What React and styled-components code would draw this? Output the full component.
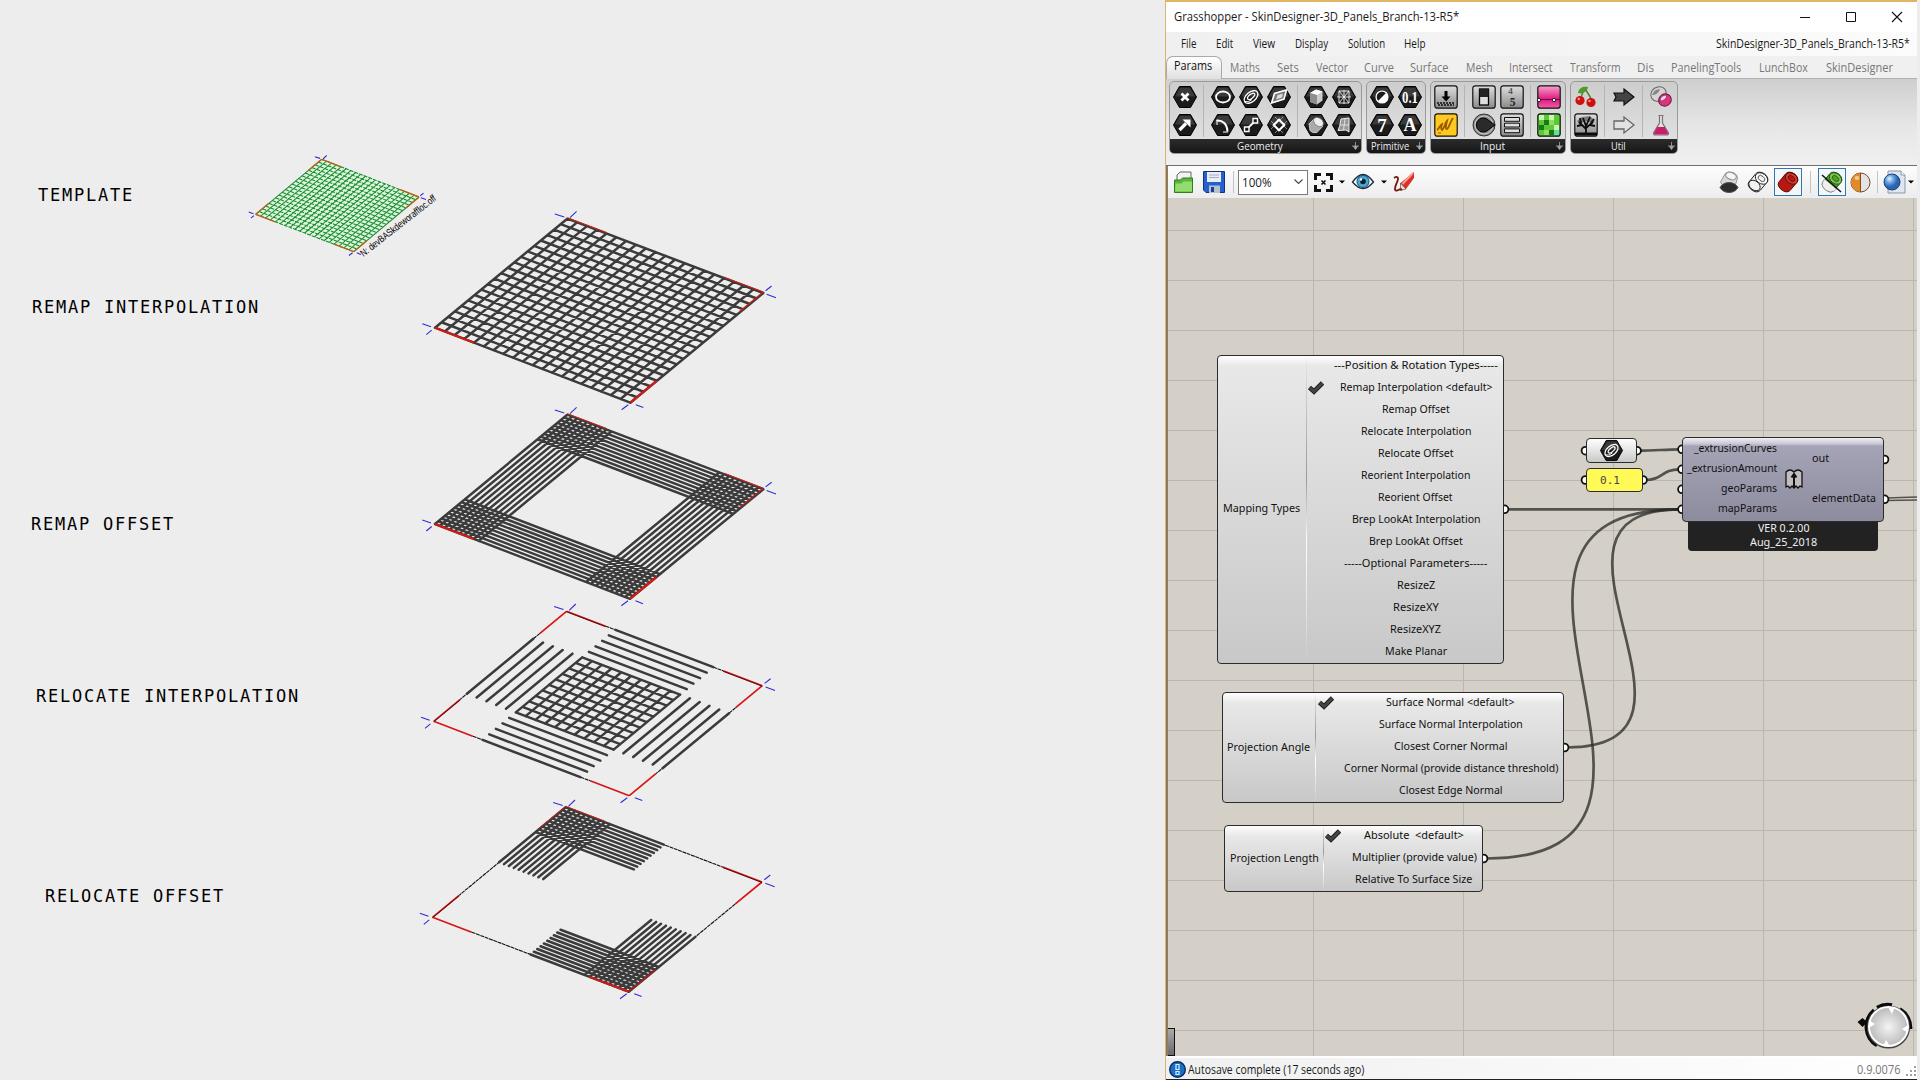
import React, { useLayoutEffect, useRef, useState } from "react";
import styled, { createGlobalStyle, css } from "styled-components";

const Global = createGlobalStyle`
  * { box-sizing: border-box; }
  body { margin: 0; background: #ededed; overflow: hidden; }
`;

/* ---------- shared ---------- */

const FitOuter = styled.span`
  display: inline-block;
  white-space: pre;
  width: ${(p) => p.$w}px;
  flex: none;
`;
const FitInner = styled.span`
  display: inline-block;
  transform-origin: 0 50%;
`;

function Fit({ w, children }) {
  const ref = useRef(null);
  const [k, setK] = useState(1);
  useLayoutEffect(() => {
    setK(w / ref.current.offsetWidth);
  }, [w, children]);
  return (
    <FitOuter $w={w}>
      <FitInner ref={ref} style={{ transform: `scaleX(${k})` }}>{children}</FitInner>
    </FitOuter>
  );
}

const Screen = styled.div`
  width: 1920px;
  height: 1080px;
  display: flex;
  background: #ededed;
  overflow: hidden;
  font-family: "Open Sans", "Noto Sans", sans-serif;
`;

/* ---------- viewport on the left ---------- */

const Viewport = styled.section`
  position: relative;
  width: 1165px;
  height: 1080px;
  padding-top: 183px;
`;
const Scene = styled.svg`
  position: absolute;
  inset: 0;
`;
const Caption = styled.div`
  font: 17px/24px "DejaVu Sans Mono", monospace;
  letter-spacing: 1.77px;
  color: #000;
  white-space: pre;
  padding-left: ${(p) => p.$x}px;
  margin-bottom: ${(p) => p.$gap}px;
`;

const captions = [
  ["TEMPLATE", 38, 88],
  ["REMAP INTERPOLATION", 32, 193],
  ["REMAP OFFSET", 31, 148],
  ["RELOCATE INTERPOLATION", 36, 176],
  ["RELOCATE OFFSET", 45, 0],
];

const fine = Array.from({ length: 21 }, (_, i) => i / 20);
const low = Array.from({ length: 10 }, (_, i) => i * 0.025);
const high = low.map((v) => 1 - v);

const at = ([a, b, c, d], u, v) => {
  const f = (i) =>
    a[i] * (1 - u) * (1 - v) + b[i] * u * (1 - v) + c[i] * u * v + d[i] * (1 - u) * v;
  return `${f(0).toFixed(2)} ${f(1).toFixed(2)}`;
};
const along = (q, vs, s, e) => vs.map((v) => `M${at(q, s, v)}L${at(q, e, v)}`).join("");
const across = (q, us, s, e) => us.map((u) => `M${at(q, u, s)}L${at(q, u, e)}`).join("");
const seg = (q, u0, v0, u1, v1) => `M${at(q, u0, v0)}L${at(q, u1, v1)}`;

const ticks = [
  [[-12.5, -4.7, -3, -1.7], [2.7, -1, 9.3, -7.3]],
  [[2.3, -2.3, 8.3, -7], [3.3, 1.3, 12.7, 4.7]],
  [[5.5, 2, 13, 4.9], [-2, 2, -8.7, 7]],
  [[-12.7, -4, -4, -1], [-3.3, 2.5, -8.7, 7]],
];

function Ticks({ q, k = 1 }) {
  const d = q
    .map(([x, y], i) =>
      ticks[i].map(([a, b, c, e]) => `M${x + a * k} ${y + b * k}L${x + c * k} ${y + e * k}`).join("")
    )
    .join("");
  return <path d={d} stroke="#2e2ed8" strokeWidth="1.1" fill="none" />;
}

const quads = {
  template: [[321.7, 159.3], [419, 197], [353.7, 251.7], [255.7, 214.3]],
  remapI: [[567.3, 218.7], [763.3, 293], [630.3, 402.7], [435, 327.7]],
  remapO: [[567.3, 414.7], [763.3, 489.2], [630, 598.8], [435, 524]],
  relocI: [[566.5, 611.3], [762.3, 685.7], [629.3, 795.7], [433.7, 721.3]],
  relocO: [[565.7, 807.3], [762, 882], [628.7, 991.7], [432.5, 917.3]],
};

const bar = { stroke: "#3b3b3b", strokeWidth: 2.5, fill: "none", strokeLinecap: "round" };

const corners = (q) =>
  [
    seg(q, 0, 0, 0.2, 0), seg(q, 0.8, 0, 1, 0), seg(q, 1, 0, 1, 0.2), seg(q, 1, 0.8, 1, 1),
    seg(q, 0.8, 1, 1, 1), seg(q, 0, 1, 0.2, 1), seg(q, 0, 0.8, 0, 1), seg(q, 0, 0, 0, 0.2),
  ].join("");

function Outline({ q }) {
  return (
    <>
      <path
        d={along(q, [0, 1], 0.2, 0.8) + across(q, [0, 1], 0.2, 0.8)}
        stroke="#111"
        strokeWidth="1.1"
        strokeDasharray="4 .6"
        fill="none"
      />
      <path d={corners(q)} stroke="#d81414" strokeWidth="1.7" fill="none" />
      <path
        d={seg(q, 0, 0, 0.2, 0) + seg(q, 0.8, 0, 1, 0) + seg(q, 0, 0.8, 0, 1)}
        stroke="#3a0505"
        strokeWidth=".8"
        transform="translate(0 .5)"
        fill="none"
      />
    </>
  );
}

function RedEdges({ q }) {
  return (
    <>
      <path
        d={seg(q, 0, 0, 0.2, 0) + seg(q, 0.8, 0, 1, 0) + seg(q, 1, 0, 1, 0.18)}
        stroke="#d0201a"
        strokeWidth="1.1"
        transform="translate(0 -1)"
        fill="none"
      />
      <path d={seg(q, 1, 0.8, 1, 1) + seg(q, 0, 1, 0.2, 1)} stroke="#d41a14" strokeWidth="2.2" fill="none" />
    </>
  );
}

function Drawings() {
  const { template: t, remapI, remapO, relocI, relocO } = quads;
  return (
    <Scene width="1165" height="1080" viewBox="0 0 1165 1080">
      <polygon points={t.map((p) => p.join(",")).join(" ")} fill="#dcf6dc" />
      <path d={along(t, fine, 0, 1)} stroke="#128a2c" strokeWidth="1.05" strokeDasharray="4 1" fill="none" />
      <path d={across(t, fine, 0, 1)} stroke="#1e8a34" strokeWidth="1.05" fill="none" />
      <path d={corners(t)} stroke="#b8641c" strokeWidth="1.4" fill="none" />
      <Ticks q={t} k={0.55} />
      <text
        transform="translate(363.500 257) rotate(-38)"
        fontFamily="Liberation Sans, sans-serif"
        fontSize="10"
        textLength="93"
        lengthAdjust="spacingAndGlyphs"
      >
        N: devBASkdeworaffloc.off
      </text>

      <path {...bar} d={along(remapI, fine, 0, 1) + across(remapI, fine, 0, 1)} />
      <RedEdges q={remapI} />
      <Ticks q={remapI} />

      <path
        {...bar}
        d={along(remapO, [...low, ...high], 0, 1) + across(remapO, [...low, ...high], 0, 1)}
      />
      <RedEdges q={remapO} />
      <Ticks q={remapO} />

      <Outline q={relocI} />
      <path {...bar} d={along(relocI, fine, 0.25, 0.75) + across(relocI, fine, 0.25, 0.75)} />
      <Ticks q={relocI} />

      <Outline q={relocO} />
      <path
        {...bar}
        d={
          along(relocO, low, 0, 0.5) + across(relocO, low, 0, 0.5) +
          along(relocO, high, 0.5, 1) + across(relocO, high, 0.5, 1)
        }
      />
      <path
        d={seg(relocO, 0, 0, 0.2, 0) + seg(relocO, 0, 0, 0, 0.2)}
        stroke="#c8201a"
        strokeWidth="1"
        transform="translate(0 -1)"
        fill="none"
      />
      <path d={seg(relocO, 0.8, 1, 1, 1)} stroke="#d41a14" strokeWidth="2" fill="none" />
      <path d={seg(relocO, 1, 0.8, 1, 1)} stroke="#c01a14" strokeWidth="1.2" fill="none" />
      <Ticks q={relocO} />
    </Scene>
  );
}

/* ---------- window chrome ---------- */

const Window = styled.main`
  width: 752px;
  height: 1080px;
  display: flex;
  flex-direction: column;
  border-left: 1px solid #d9b46c;
  border-top: 2px solid #e2b562;
  background: #f0f0f0;
  color: #1a1a1a;
`;
const TitleBar = styled.header`
  height: 30px;
  flex: none;
  display: flex;
  align-items: center;
  padding: 0 15px 1px 8px;
  background: #fff;
  font-size: 12.5px;
`;
const Controls = styled.div`
  margin-left: auto;
  display: flex;
  align-items: center;
  gap: 36px;
`;
const MenuBar = styled.nav`
  height: 24px;
  flex: none;
  display: flex;
  align-items: center;
  padding: 0 7px 0 15px;
  background: linear-gradient(90deg, #f0f0f0, #f5f5f5 60%, #fcfcfc);
  font-size: 12px;
`;
const MenuItem = styled.span`
  margin-right: 19.7px;
  line-height: 20px;
`;
const DocName = styled.span`
  margin-left: auto;
  line-height: 20px;
`;
const TabRow = styled.div`
  height: 23px;
  flex: none;
  display: flex;
  align-items: center;
  background: #f0f0f0;
  box-shadow: inset 0 -1px #b0b0b0;
  font-size: 12px;
  color: #777;
`;
const ActiveTab = styled.div`
  width: 56px;
  height: 23px;
  padding: 0 0 2px 7px;
  border: 1px solid #aaa;
  border-bottom: 0;
  border-radius: 7px 7px 0 0;
  background: linear-gradient(#fff, #e0e0e0);
  color: #111;
  line-height: 18px;
  margin-right: 8px;
`;
const Tab = styled.span`
  margin-right: ${(p) => p.$gap}px;
  line-height: 20px;
`;
const Ribbon = styled.div`
  height: 87px;
  flex: none;
  display: flex;
  align-items: flex-start;
  gap: 4px;
  padding: 2px 0 0 3px;
  background: linear-gradient(#cfcfcf, #e6e6e6 55%, #f0f0f0);
  border-bottom: 1px solid #6e6e6e;
`;
const Group = styled.section`
  height: 73px;
  width: ${(p) => p.$w}px;
  border: 1px solid #999;
  border-radius: 5px;
  overflow: hidden;
  display: flex;
  flex-direction: column;
  justify-content: space-between;
  background: linear-gradient(#cdcdcd, #e4e4e4);
`;
const Sets = styled.div`
  display: flex;
  padding: 2.5px 0 0 3px;
`;
const IconSet = styled.div`
  display: grid;
  grid-auto-flow: column;
  grid-template-rows: 24px 24px;
  gap: 4px;
  & + & {
    margin-left: 6.3px;
    padding-left: 6.3px;
    border-left: 1px solid #b4b4b4;
  }
`;
const GroupLabel = styled.footer`
  height: 14px;
  display: grid;
  grid-template-columns: 1fr 12px;
  justify-items: center;
  align-items: center;
  background: linear-gradient(#2c2c2c, #161616);
  color: #eee;
  font-size: 11px;
  line-height: 14px;
`;
const Icon = styled.svg`
  display: block;
  flex: none;
  overflow: visible;
`;

const Toolbar = styled.div`
  height: 32px;
  flex: none;
  display: flex;
  align-items: center;
  border-left: 2px solid #8c7a62;
  background: linear-gradient(#fdfdfd, #ededed);
  padding-left: 5px;
`;
const Item = styled.span`
  display: inline-flex;
  justify-content: center;
  align-items: center;
  width: ${(p) => p.$w}px;
  height: 28px;
  margin-right: ${(p) => p.$gap || 0}px;
  ${(p) => p.$on && css`border: 1px solid #2f78b0; background: #f4f7f9;`}
`;
const Rule = styled.span`
  width: 1px;
  height: 22px;
  background: #c4c4c4;
  margin: 0 ${(p) => p.$r}px 0 ${(p) => p.$l}px;
`;
const Zoom = styled.span`
  width: 70px;
  height: 25px;
  border: 1px solid #7a7a7a;
  background: #fff;
  display: inline-flex;
  align-items: center;
  justify-content: space-between;
  padding: 0 4px 0 3px;
  font-size: 12px;
  margin-right: 5px;
`;
const Push = styled.span`
  flex: 1;
`;
const Status = styled.footer`
  height: 24px;
  flex: none;
  display: flex;
  align-items: center;
  border-top: 2px solid #fff;
  border-bottom: 1px solid #222;
  padding: 2px 0 0 3px;
  background: linear-gradient(90deg, #f0f0f0, #fff);
  font-size: 12px;
  gap: 2px;
`;
const Version = styled.span`
  margin-left: auto;
  margin-right: 3px;
  color: #777;
`;

const hexPoints = "0.5,12 6.5,1.5 17.5,1.5 23.5,12 17.5,22.5 6.5,22.5";

function Hex({ children, size = 24 }) {
  return (
    <Icon width={size} height={size} viewBox="0 0 24 24">
      <polygon points={hexPoints} fill="#1b1b1b" stroke="#000" strokeLinejoin="round" />
      <polygon points="2,11.5 7,2.7 17,2.7 22,11.5" fill="#5a5a5a" opacity=".5" />
      {children}
    </Icon>
  );
}
function Tile({ children, fill = "url(#steel)" }) {
  return (
    <Icon width="24" height="24" viewBox="0 0 24 24">
      <rect x=".8" y=".8" width="22.4" height="22.4" rx="2.5" fill={fill} stroke="#111" strokeWidth="1.2" />
      {children}
    </Icon>
  );
}
const Glyph = styled.text`
  font-family: "Liberation Serif", serif;
  font-weight: 700;
  fill: ${(p) => p.$c || "#fff"};
  text-anchor: middle;
`;
const w = { stroke: "#fff", strokeWidth: 1.6, fill: "none" };

const CurveMark = () => (
  <>
    <ellipse cx="12" cy="12" rx="8" ry="4.8" transform="rotate(-40 12 12)" {...w} strokeWidth="1.3" />
    <ellipse cx="12.5" cy="11.600" rx="4.300" ry="2" transform="rotate(-40 12 12)" {...w} strokeWidth="1.3" />
    <path d="M6 16.500Q9 18 13 14.500" {...w} strokeWidth="1" />
  </>
);

const geometry = [
  [
    <Hex key="x"><path d="M8.500 8.500l7 7M15.500 8.500l-7 7" {...w} strokeWidth="2.800" /></Hex>,
    <Hex key="v"><path d="M6.500 17L13 10.500" {...w} strokeWidth="3.200" /><path d="M9.500 6.500h8v8z" fill="#fff" /></Hex>,
  ],
  [
    <Hex key="c"><ellipse cx="12" cy="12" rx="7" ry="5.500" {...w} strokeWidth="1.800" /></Hex>,
    <Hex key="a"><path d="M5.500 7.500C12 7 16 11 16.500 18.500" {...w} strokeWidth="2" /><path d="M6 7v5M12 19h5" {...w} strokeWidth="1" /></Hex>,
    <Hex key="cu"><CurveMark /></Hex>,
    <Hex key="l"><path d="M8 16L16 8" {...w} strokeWidth="1.800" /><path d="M5.500 14h4.500v4.500h-4.500zM14 5.500h4.500v4.500h-4.500z" fill="#1b1b1b" stroke="#fff" strokeWidth="1.400" /></Hex>,
    <Hex key="p"><path d="M4.500 18l3-9.500 12-3.500-2.500 9z" fill="#777" stroke="#fff" strokeWidth="1.600" /><path d="M9 14.500l1.500-4.500 5.500-1.500-1 4z" fill="#ddd" /></Hex>,
    <Hex key="r"><path d="M4 8l12 12M8 4l12 12M20 8L8 20M16 4L4 16" {...w} strokeWidth=".800" opacity=".6" /><path d="M12 6.500l5.500 5.500-5.500 5.500-5.500-5.500z" {...w} strokeWidth="1.800" /></Hex>,
  ],
  [
    <Hex key="b"><path d="M6 8l6-3.500 6.500 2v9L13 19.500 6 17z" fill="#ccc" /><path d="M6 8l7 2 5.500-3.500-6.500-2z" fill="#fff" /><path d="M13 10v9.500L6 17V8z" fill="#8e8e8e" /></Hex>,
    <Hex key="br"><path d="M5 11l5-5 9 7-6 6.500q-5 1-7-2z" fill="#aaa" stroke="#ddd" strokeWidth=".800" /><ellipse cx="14.500" cy="9" rx="5.500" ry="3.800" transform="rotate(40 14.500 9)" fill="#eee" stroke="#666" strokeWidth=".600" /></Hex>,
    <Hex key="m"><path d="M7 6h10v12H7zM12 5v14M5 12h14M7 6l10 12M17 6L7 18" {...w} strokeWidth="1" opacity=".850" /></Hex>,
    <Hex key="s"><path d="M9 6l8-1v14l-3-2-8 .500q2-4 3-11.500z" fill="#999" stroke="#eee" strokeWidth="1" /><path d="M8 12h9M13 6l-1.500 11" stroke="#eee" strokeWidth=".800" /></Hex>,
  ],
];

const primitive = [
  [
    <Hex key="b"><circle cx="12" cy="12" r="6" fill="#fff" /><path d="M16 8A5.600 5.600 0 0 0 8 16z" fill="#1b1b1b" /><circle cx="12" cy="12" r="6" {...w} strokeWidth="1.200" /></Hex>,
    <Hex key="7"><Glyph x="12" y="18.500" fontSize="19">7</Glyph></Hex>,
    <Hex key="01"><Glyph x="12" y="17.500" fontSize="16" textLength="16" lengthAdjust="spacingAndGlyphs">0.1</Glyph></Hex>,
    <Hex key="A"><Glyph x="12" y="18" fontSize="18">A</Glyph></Hex>,
  ],
];

const input = [
  [
    <Tile key="bt"><path d="M12 6v7" stroke="#000" strokeWidth="3" /><path d="M7.500 11.500h9L12 16.500z" /><path d="M3 18h18M4 20h16" stroke="#111" strokeWidth="1.500" strokeDasharray="2 1" /></Tile>,
    <Tile key="gm" fill="#ffc91f"><path d="M3 17c2-1 3-5 5-6-1 3-1 6 0 6 2-1 3-7 5-9-1 4-2 8 0 8 2-1 3-7 6-11" stroke="#9a5b00" strokeWidth="1.800" fill="none" /><path d="M4 20h3" stroke="#9a5b00" /></Tile>,
  ],
  [
    <Tile key="sw"><rect x="7.500" y="4" width="9" height="16" fill="#ddd" stroke="#000" strokeWidth="1.300" /><rect x="7.500" y="4" width="9" height="8" fill="#222" /></Tile>,
    <Icon key="kn" width="24" height="24" viewBox="0 0 24 24"><circle cx="12" cy="12" r="11" fill="#8a8a8a" stroke="#333" /><circle cx="12" cy="12" r="9" fill="none" stroke="#ccc" strokeWidth="1" /><path d="M14 5.500A7 7 0 1 0 14 18.500L23 12z" fill="#2a2a2a" stroke="#000" /></Icon>,
    <Tile key="ds"><Glyph x="10.500" y="8.500" fontSize="9" $c="#555">4</Glyph><Glyph x="12.500" y="21" fontSize="11.500" $c="#222">5</Glyph></Tile>,
    <Tile key="vl"><path d="M4.500 4.500h15v3.800h-15zM4.500 10.200h15v3.800h-15zM4.500 15.900h15v3.800h-15z" fill="#ddd" stroke="#111" /></Tile>,
  ],
  [
    <Tile key="gr" fill="url(#pink)"><path d="M1 14.500h22" stroke="#7d0040" /><circle cx="2" cy="15" r="1.700" fill="#fff" stroke="#222" /><circle cx="17" cy="15" r="1.700" fill="#fff" stroke="#222" /></Tile>,
    <Tile key="im" fill="#5cc83a"><path d="M2 2h5v5H2zM12 2h5v5h-5zM17 12h5v5h-5z" fill="#c8f8b0" /><path d="M7 7h5v5H7zM2 12h5v5H2zM12 17h5v5h-5z" fill="#177a12" /><path d="M12 7h5v5h-5zM7 17h5v5H7z" fill="#8fe060" /><path d="M17 17h5v5h-5z" fill="#5fe0b0" /></Tile>,
  ],
];

const util = [
  [
    <Icon key="ch" width="24" height="24" viewBox="0 0 24 24"><path d="M11 4C8 8 7 12 7 15M11 4c3 4 6 8 7 13" stroke="#4a7a1a" strokeWidth="1.300" fill="none" /><path d="M4 8c1-6 6-7 10-6-1 5-5 7-10 6z" fill="#4f9a2a" /><circle cx="6" cy="15.500" r="4.600" fill="#cc1111" /><circle cx="17" cy="17.500" r="4.600" fill="#cc1111" /><circle cx="4.800" cy="14" r="1.200" fill="#ff9a9a" /><circle cx="15.500" cy="16" r="1.200" fill="#ff9a9a" /></Icon>,
    <Tile key="tr"><path d="M12 21V12M12 16L5 9M12 15l7-6M12 13L9 5M12 13l4-9M8 12l-5 1M16 12l5 1M7 10l-1-5M17 10l3-4" stroke="#0c0c0c" strokeWidth="1.800" fill="none" /><path d="M3 8l5-4 8-1 5 5-3 3-4-3-5 1-3 3z" fill="#111" opacity=".45" /><path d="M1 19.500h22v3H1z" fill="#0c0c0c" /></Tile>,
  ],
  [
    <Icon key="a1" width="24" height="24" viewBox="0 0 24 24"><path d="M2 8h10V4l10 8-10 8v-4H2l2-4z" fill="#444" stroke="#111" strokeWidth="1.200" /></Icon>,
    <Icon key="a2" width="24" height="24" viewBox="0 0 24 24"><path d="M2 8h10V4l10 8-10 8v-4H2z" fill="#e2e2e2" stroke="#666" strokeWidth="1.300" /></Icon>,
  ],
  [
    <Icon key="t1" width="24" height="24" viewBox="0 0 24 24"><ellipse cx="9.500" cy="9" rx="8" ry="7" transform="rotate(-35 9.500 9)" fill="#d4d4d4" stroke="#666" /><path d="M3 10q2-6 8-6-2 6-8 6z" fill="#888" /><ellipse cx="16" cy="15" rx="6.500" ry="6" transform="rotate(-35 16 15)" fill="#d8367e" stroke="#7a1048" /><path d="M11 16q0-6 7-6-1 6-7 6z" fill="#f8d0e4" stroke="#6a1040" strokeWidth=".600" /></Icon>,
    <Icon key="fl" width="24" height="24" viewBox="0 0 24 24"><path d="M9.500 2.500h5M10.500 3v7L4.500 20q0 2 2 2h11q2 0 2-2l-6-10V3" fill="#e8dde2" stroke="#777" strokeWidth="1.200" /><path d="M8.300 14h7.400l3.300 6q0 1.500-1.500 1.500h-11Q5 21.500 5 20z" fill="#c81e6a" /></Icon>,
  ],
];

const groups = [
  ["Geometry", 193, 45.5, geometry],
  ["Primitive", 60, 38, primitive],
  ["Input", 136, 25, input],
  ["Util", 108, 15, util],
];

const tabs = [
  ["Maths", 30, 16.5], ["Sets", 21.5, 17.5], ["Vector", 32, 16], ["Curve", 30.5, 15.5],
  ["Surface", 38.5, 17.5], ["Mesh", 27, 16.5], ["Intersect", 43.5, 17.5], ["Transform", 51, 16],
  ["Dis", 16.5, 17], ["PanelingTools", 70.5, 17.7], ["LunchBox", 48.5, 18.5], ["SkinDesigner", 67, 0],
];

const menus = [["File", 15.5], ["Edit", 17], ["View", 22], ["Display", 33.5], ["Solution", 37], ["Help", 21.5]];

const Caret = ({ gap, w: width = 10 }) => (
  <Item $w={width} $gap={gap}>
    <Icon width="6" height="4" viewBox="0 0 6 4"><path d="M0 .5h6L3 3.500z" /></Icon>
  </Item>
);

function Cylinder({ side, top, line }) {
  return (
    <>
      <path d="M1.500 11.500L8.500 3q3-3.500 8.500-.500 5 3.500 3.500 8L13.500 19q-3 3.500-8 .500-5.500-4-4-8z" fill={side} stroke={line} strokeWidth="1" />
      <ellipse cx="14.500" cy="7.500" rx="6.800" ry="5" transform="rotate(38 14.500 7.500)" fill={top} stroke={line} strokeWidth=".900" />
      <ellipse cx="14.500" cy="7.500" rx="3.800" ry="2.500" transform="rotate(38 14.500 7.500)" fill={side} stroke={line} strokeWidth=".700" />
    </>
  );
}

function ToolbarRow() {
  return (
    <Toolbar>
      <Item $w={22} $gap={8}>
        <Icon width="22" height="24" viewBox="0 0 22 24">
          <path d="M4 12V5l3-3h11v10" fill="#f2f2f2" stroke="#666" />
          <path d="M1.500 22.500V10h6l2-2h10v14.500z" fill="#5cb43c" stroke="#2f7d1e" />
          <path d="M2 21.500l.5-8h6l2-2H19v10z" fill="#93dc70" />
        </Icon>
      </Item>
      <Item $w={22}>
        <Icon width="22" height="22" viewBox="0 0 22 22">
          <path d="M.5.5h21v21H3L.5 19z" fill="#2660cc" stroke="#12337c" />
          <path d="M4 1h14v10H4z" fill="#e8eef6" />
          <path d="M6 4h10M6 6.500h10" stroke="#aab" />
          <path d="M6 14.500h11V22H6z" fill="#b8c0cc" />
          <path d="M8 16h3v5H8z" fill="#1b3f94" />
        </Icon>
      </Item>
      <Rule $l={8} $r={4} />
      <Zoom>
        <Fit w={30}>100%</Fit>
        <Icon width="9" height="6" viewBox="0 0 9 6"><path d="M.5.5l4 4 4-4" fill="none" stroke="#444" strokeWidth="1.100" /></Icon>
      </Zoom>
      <Item $w={20} $gap={4}>
        <Icon width="19" height="19" viewBox="0 0 19 19">
          <path d="M1.500 7V1.500H7M12 1.500h5.500V7M17.500 12v5.500H12M7 17.500H1.500V12" stroke="#111" strokeWidth="3" fill="none" />
          <path d="M7.500 7.500l4 4M11.500 7.500l-4 4" stroke="#111" strokeWidth="1.600" />
        </Icon>
      </Item>
      <Caret gap={5} />
      <Item $w={22} $gap={5}>
        <Icon width="22" height="18" viewBox="0 0 22 18">
          <path d="M.5 9Q6 1.500 11 1.500T21.500 9Q16 15.500 11 15.500T.5 9z" fill="#f2f8fb" stroke="#1c2c38" strokeWidth="1.300" />
          <circle cx="11" cy="8.500" r="6" fill="#48a8d8" stroke="#174a70" />
          <circle cx="11" cy="8.500" r="2.800" fill="#06202e" />
          <circle cx="9" cy="6.500" r="1.200" fill="#fff" />
        </Icon>
      </Item>
      <Caret gap={4} />
      <Item $w={22}>
        <Icon width="22" height="22" viewBox="0 0 22 22">
          <path d="M21 1v6l-8 11-5-1-.5-5z" fill="#d8322a" />
          <path d="M20 2L9.500 13" stroke="#ff9a90" strokeWidth="2" />
          <path d="M7.500 12l5.500 6-5.500 1.500z" fill="#f0dcb8" stroke="#444" strokeWidth=".600" />
          <path d="M1 7c3-2 5-1 3.500 3S.5 19 3 19.500s4-3 6-.500" stroke="#7a1712" strokeWidth="1.800" fill="none" />
        </Icon>
      </Item>
      <Push />
      <Item $w={22} $gap={7}>
        <Icon width="20" height="24" viewBox="0 0 20 24">
          <path d="M1.500 12L6 4q3-3.500 8-1.500 5 2 4.500 6L16 16H4z" fill="#d8d8d8" stroke="#999" />
          <ellipse cx="12" cy="6" rx="5.500" ry="3.500" transform="rotate(20 12 6)" fill="#f6f6f6" stroke="#888" />
          <path d="M1 17.500q3-5 9-5t9 5q-3 5-9 5t-9-5z" fill="#2c2c2c" stroke="#555" />
        </Icon>
      </Item>
      <Item $w={22} $gap={5}>
        <Icon width="22" height="22" viewBox="0 0 22 22">
          <Cylinder side="#f2f2f2" top="#fff" line="#222" />
          <ellipse cx="7.500" cy="14.500" rx="6.300" ry="4.500" transform="rotate(38 7.500 14.500)" fill="none" stroke="#222" strokeWidth=".900" />
        </Icon>
      </Item>
      <Item $w={28} $on>
        <Icon width="22" height="22" viewBox="0 0 22 22"><Cylinder side="#b81812" top="#d43c36" line="#5c0805" /></Icon>
      </Item>
      <Rule $l={8} $r={7} />
      <Item $w={28} $gap={3} $on>
        <Icon width="22" height="22" viewBox="0 0 22 22">
          <Cylinder side="#4ea028" top="#7cc854" line="#1f5410" />
          <path d="M3.500 8L15.500 18q-4.500 5-10 1.500-5.500-4-4-8z" fill="#eee" stroke="#888" strokeWidth=".600" />
          <path d="M1 4l19 17" stroke="#111" strokeWidth="1.500" />
        </Icon>
      </Item>
      <Item $w={22}>
        <Icon width="21" height="21" viewBox="0 0 21 21">
          <circle cx="10.500" cy="10.500" r="9.500" fill="#e4e4e4" stroke="#6b4a30" />
          <path d="M10.500 1a9.500 9.500 0 0 0 0 19z" fill="#e08a2c" />
          <path d="M10.500 1v19" stroke="#8b4a14" />
          <ellipse cx="7" cy="6" rx="2.500" ry="2" fill="#f6c890" />
        </Icon>
      </Item>
      <Rule $l={6} $r={5} />
      <Item $w={23}>
        <Icon width="23" height="24" viewBox="0 0 23 24">
          <path d="M5 1h13l4 4v18H5z" fill="#dfe6ef" stroke="#8a97a8" />
          <path d="M18 1v4h4" fill="#fff" stroke="#8a97a8" />
          <circle cx="9" cy="12" r="8" fill="url(#ball)" stroke="#1c3f78" />
        </Icon>
      </Item>
      <Caret w={9} gap={2} />
    </Toolbar>
  );
}

/* ---------- node canvas ---------- */

const Canvas = styled.section`
  position: relative;
  flex: 1;
  min-height: 0;
  overflow: hidden;
  border-left: 2px solid #8c7a62;
  background-color: #d4d0c8;
  background-image: linear-gradient(90deg, #bbb7af 1px, transparent 1px),
    linear-gradient(#bbb7af 1px, transparent 1px);
  background-size: 150px 50px;
  background-position: -5px 32px;
  font-family: "Noto Sans", "Open Sans", sans-serif;
  color: #111;
`;
const Wires = styled.svg`
  position: absolute;
  left: -1168px;
  top: -198px;
`;
const Node = styled.div`
  position: absolute;
  left: ${(p) => p.$x - 1168}px;
  top: ${(p) => p.$y - 198}px;
  width: ${(p) => p.$w}px;
  height: ${(p) => p.$h}px;
  border: 1.5px solid #2b2b2b;
  border-radius: 4px;
  display: flex;
  background: linear-gradient(#fff 0, #e8e8e8 10px, #c8c8c8);
  ${(p) => p.$tone === "panel" && css`background: #fffa57;`}
  ${(p) => p.$tone === "comp" && css`background: linear-gradient(#f0eff4 0, #c8c6d4 6px, #a5a3b6 8px, #8d8b9e);`}
`;
const NodeTitle = styled.div`
  width: ${(p) => p.$w}px;
  flex: none;
  display: flex;
  align-items: center;
  justify-content: center;
  padding-bottom: 3px;
  font-size: 11px;
  border-right: 1.5px solid;
  border-image: linear-gradient(transparent, #999 40%, #fff 60%, transparent) 1;
`;
const Options = styled.ul`
  list-style: none;
  margin: 0;
  padding: 0 2px 0 0;
  flex: 1;
  font-size: 11px;
`;
const Option = styled.li`
  height: 22px;
  line-height: 17px;
  display: grid;
  grid-template-columns: 24px 1fr;
  justify-items: center;
`;
const Tick = styled.svg`
  margin: 2px 5px 0 0;
`;
const Ports = styled.div`
  display: flex;
  flex-direction: column;
  font-size: 11.5px;
  line-height: 20px;
  align-items: ${(p) => (p.$end ? "flex-end" : "flex-start")};
  width: ${(p) => p.$w}px;
  padding-top: ${(p) => p.$top}px;
  gap: ${(p) => p.$gap || 0}px;
`;
const VersionTag = styled.div`
  position: absolute;
  left: 520px;
  top: 323px;
  width: 190px;
  height: 30px;
  border-radius: 0 0 4px 4px;
  background: #222;
  color: #f0f0f0;
  font-size: 11px;
  line-height: 14px;
  display: flex;
  flex-direction: column;
  align-items: center;
`;
const PanelValue = styled.span`
  font: 10.5px/22px "DejaVu Sans Mono", monospace;
  color: #444;
  padding-left: 13px;
`;
const Centre = styled.div`
  margin: auto;
`;
const BookIcon = styled.svg`
  margin: 30px 9px 0 8px;
`;
const SideHandle = styled.div`
  position: absolute;
  left: 0;
  bottom: 0;
  width: 7px;
  height: 28px;
  border: 1px solid #111;
  border-left: 0;
  background: linear-gradient(#aaa, #6a6a6a);
`;

const lists = [
  {
    title: ["Mapping Types", 77.5], box: [1217, 354.5, 287, 309], titleW: 88.5, checked: 1,
    rows: [
      ["---Position & Rotation Types-----", 163.5], ["Remap Interpolation <default>", 152.5], ["Remap Offset", 68],
      ["Relocate Interpolation", 110.5], ["Relocate Offset", 76], ["Reorient Interpolation", 109.5],
      ["Reorient Offset", 75], ["Brep LookAt Interpolation", 128.5], ["Brep LookAt Offset", 94],
      ["-----Optional Parameters-----", 143.5], ["ResizeZ", 38.5], ["ResizeXY", 45.5], ["ResizeXYZ", 51.5], ["Make Planar", 62],
    ],
  },
  {
    title: ["Projection Angle", 83.5], box: [1222, 692, 342, 111], titleW: 93, checked: 0,
    rows: [
      ["Surface Normal <default>", 129], ["Surface Normal Interpolation", 143.5], ["Closest Corner Normal", 113],
      ["Corner Normal (provide distance threshold)", 214], ["Closest Edge Normal", 104],
    ],
  },
  {
    title: ["Projection Length", 88.5], box: [1224, 825, 259, 67], titleW: 98.5, checked: 0,
    rows: [["Absolute  <default>", 99.5], ["Multiplier (provide value)", 124.5], ["Relative To Surface Size", 117]],
  },
];

function ValueList({ title, box, titleW, checked, rows }) {
  const [x, y, bw, bh] = box;
  return (
    <Node $x={x} $y={y} $w={bw} $h={bh}>
      <NodeTitle $w={titleW}><Fit w={title[1]}>{title[0]}</Fit></NodeTitle>
      <Options>
        {rows.map(([text, width], i) => (
          <Option key={text}>
            {i === checked ? (
              <Tick width="18" height="15" viewBox="0 0 18 15">
                <path d="M2.500 7.500l4.500 4L15.500 3" stroke="#1b1b1b" strokeWidth="4.600" fill="none" />
                <path d="M2.500 7.500l4.500 4L15.500 3" stroke="#444" strokeWidth="3" fill="none" />
              </Tick>
            ) : (
              <span />
            )}
            <Fit w={width}>{text}</Fit>
          </Option>
        ))}
      </Options>
    </Node>
  );
}

const grips = [
  [1504.5, 509.3], [1564.5, 747.5], [1483.5, 858.5], [1585.5, 450.7], [1637, 450.7],
  [1585.5, 480], [1643, 480], [1682, 449.3], [1682, 469.3], [1682, 489.3], [1682, 509.3],
  [1884.5, 459.5], [1884.5, 499.3],
];

function Graph() {
  return (
    <Canvas>
      <Wires width="1920" height="1080" viewBox="0 0 1920 1080">
        <g fill="none" stroke="#2c2a26" strokeOpacity=".76" strokeWidth="2.700">
          <path d="M1507 509.300H1680" />
          <path d="M1567 747.500C1739 747.500 1508 509.300 1680 509.300" />
          <path d="M1486 858.500C1744 858.500 1422 509.300 1680 509.300" />
          <path d="M1639 450.700C1655 450.700 1665 449.300 1680 449.300" />
          <path d="M1645 480C1663 480 1661 469.300 1680 469.300" />
          <path d="M1886 498L1920 496.800M1886 500.500L1920 500" strokeWidth="1.500" />
        </g>
        <g fill="#fff" stroke="#111" strokeWidth="1.800">
          {grips.map(([x, y]) => <circle key={`${x}-${y}`} cx={x} cy={y} r="3.900" />)}
        </g>
        <g>
          <path d="M1877 1045.500A22 22 0 0 1 1874 1010M1877 1007.500A22 22 0 0 1 1892 1005M1900 1009A22 22 0 0 1 1910.500 1029" fill="none" stroke="#0a0a0a" strokeWidth="3.600" />
          <path d="M1857.500 1022l5-4 3 2.500h4v3.500h-4l-3 3z" fill="#0a0a0a" />
          <circle cx="1888.500" cy="1027" r="20.500" fill="url(#dial)" stroke="#444" strokeWidth="2.200" />
          <circle cx="1888.500" cy="1026.500" r="19.500" fill="none" stroke="#fff" strokeWidth="2" />
          <path d="M1888 1007h7l-3 7zM1869 1020l6 4-6 4zM1908 1025l-6 4 6 4zM1883 1046l3-6 4 6z" fill="#fff" />
        </g>
      </Wires>

      {lists.map((l) => <ValueList key={l.title[0]} {...l} />)}

      <Node $x={1586} $y={438} $w={51} $h={25}>
        <Centre><Hex size={23}><CurveMark /></Hex></Centre>
      </Node>
      <Node $x={1586} $y={468} $w={57} $h={24} $tone="panel">
        <PanelValue><Fit w={20}>0.1</Fit></PanelValue>
      </Node>

      <VersionTag>
        <Fit w={51}>VER 0.2.00</Fit>
        <Fit w={67}>Aug_25_2018</Fit>
      </VersionTag>
      <Node $x={1682} $y={437} $w={202} $h={85} $tone="comp">
        <Ports $w={94} $end $top={0}>
          <Fit w={83}>_extrusionCurves</Fit>
          <Fit w={90}>_extrusionAmount</Fit>
          <Fit w={56}>geoParams</Fit>
          <Fit w={59}>mapParams</Fit>
        </Ports>
        <BookIcon width="18" height="22" viewBox="0 0 18 22">
          <path d="M1 19V4q4-4 8 0 4-4 8 0v15l-2-1-2 2-2-2-2 2-2-2-2 2-2-2z" fill="#c2bec0" stroke="#111" strokeWidth="1.300" />
          <path d="M9 19V7M6.500 9.500L9 6l2.500 3.500" fill="none" stroke="#111" strokeWidth="2" />
        </BookIcon>
        <Ports $w={66} $top={10} $gap={20}>
          <Fit w={17}>out</Fit>
          <Fit w={64}>elementData</Fit>
        </Ports>
      </Node>
      <SideHandle />
    </Canvas>
  );
}

const Defs = styled.svg`
  position: absolute;
  width: 0;
  height: 0;
`;

export default function App() {
  return (
    <>
      <Global />
      <Defs>
        <defs>
          <linearGradient id="steel" x2="0" y2="1"><stop stopColor="#dedede" /><stop offset="1" stopColor="#8a8a8a" /></linearGradient>
          <linearGradient id="pink" x2="0" y2="1"><stop stopColor="#f6a0cc" /><stop offset=".6" stopColor="#e01880" /><stop offset="1" stopColor="#f060a8" /></linearGradient>
          <radialGradient id="ball" cx=".35" cy=".3"><stop stopColor="#e4f2ff" /><stop offset=".5" stopColor="#6aa6e4" /><stop offset="1" stopColor="#2c64b0" /></radialGradient>
          <radialGradient id="dial"><stop stopColor="#f4f4f4" /><stop offset="1" stopColor="#b8b8b8" /></radialGradient>
        </defs>
      </Defs>
      <Screen>
        <Viewport>
          <Drawings />
          {captions.map(([text, x, gap]) => (
            <Caption key={text} $x={x} $gap={gap}>{text}</Caption>
          ))}
        </Viewport>
        <Window>
          <TitleBar>
            <Fit w={285}>Grasshopper - SkinDesigner-3D_Panels_Branch-13-R5*</Fit>
            <Controls>
              <Icon width="10" height="10" viewBox="0 0 10 10"><path d="M0 5.500h10" stroke="#111" /></Icon>
              <Icon width="10" height="10" viewBox="0 0 10 10"><path d="M.5.5h9v9h-9z" stroke="#111" fill="none" /></Icon>
              <Icon width="10" height="10" viewBox="0 0 10 10"><path d="M0 0l10 10M10 0L0 10" stroke="#111" strokeWidth="1.100" /></Icon>
            </Controls>
          </TitleBar>
          <MenuBar>
            {menus.map(([text, width]) => (
              <MenuItem key={text}><Fit w={width}>{text}</Fit></MenuItem>
            ))}
            <DocName><Fit w={194}>SkinDesigner-3D_Panels_Branch-13-R5*</Fit></DocName>
          </MenuBar>
          <TabRow>
            <ActiveTab><Fit w={38}>Params</Fit></ActiveTab>
            {tabs.map(([text, width, gap]) => (
              <Tab key={text} $gap={gap}><Fit w={width}>{text}</Fit></Tab>
            ))}
          </TabRow>
          <Ribbon>
            {groups.map(([name, gw, tw, sets]) => (
              <Group key={name} $w={gw}>
                <Sets>{sets.map((s, i) => <IconSet key={i}>{s}</IconSet>)}</Sets>
                <GroupLabel>
                  <Fit w={tw}>{name}</Fit>
                  <Icon width="7" height="8" viewBox="0 0 7 8"><path d="M3.500 0v5M0 4h7M1.500 4.500h4l-2 3z" stroke="#aaa" strokeWidth=".800" fill="#aaa" /></Icon>
                </GroupLabel>
              </Group>
            ))}
          </Ribbon>
          <ToolbarRow />
          <Graph />
          <Status>
            <Icon width="17" height="17" viewBox="0 0 17 17">
              <circle cx="8.500" cy="8.500" r="7.800" fill="#1c6fc0" stroke="#0a2a66" strokeWidth="1.400" />
              <path d="M7 3.500h3v5H7zM7 10.500h3v3H7z" fill="none" stroke="#d6f0ff" strokeWidth="1.200" />
            </Icon>
            <Fit w={176}>Autosave complete (17 seconds ago)</Fit>
            <Version><Fit w={43}>0.9.0076</Fit></Version>
            <Icon width="12" height="12" viewBox="0 0 12 12">
              <path d="M9 2h2v2H9zM9 6h2v2H9zM9 10h2v2H9zM5 6h2v2H5zM5 10h2v2H5zM1 10h2v2H1z" fill="#a0a0a0" />
            </Icon>
          </Status>
        </Window>
      </Screen>
    </>
  );
}
